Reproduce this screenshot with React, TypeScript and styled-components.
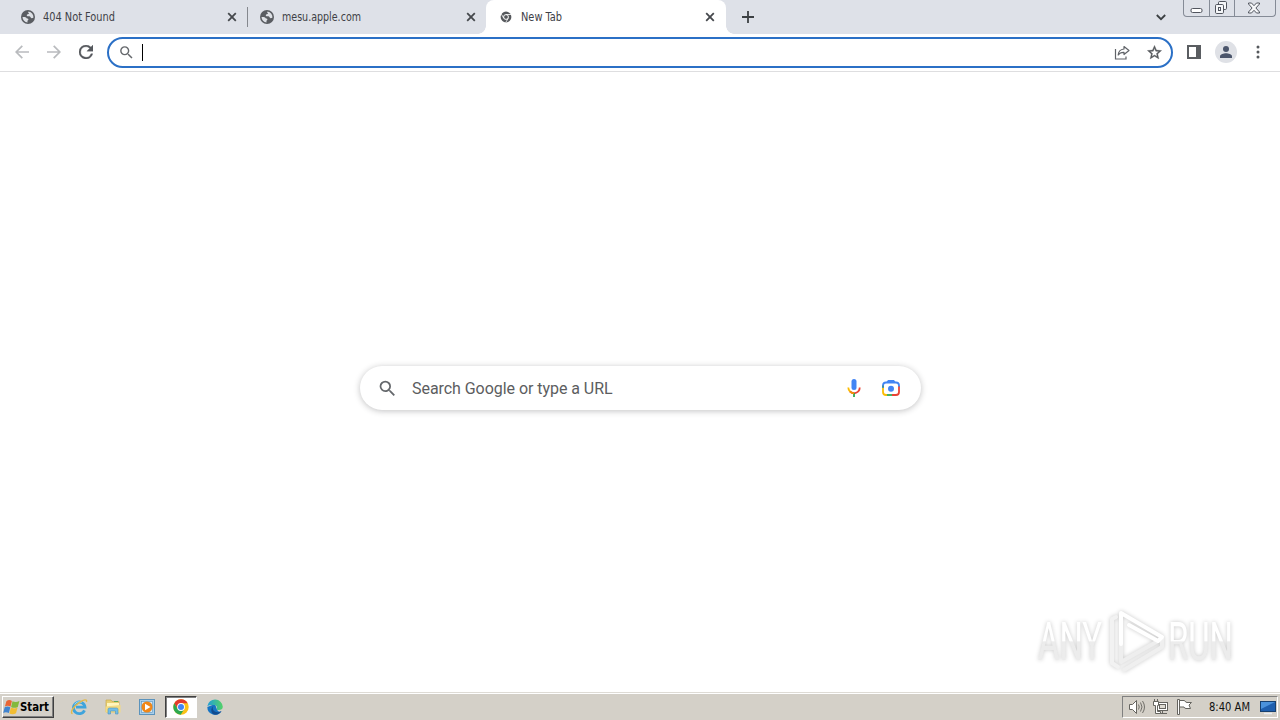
import React from 'react';
import styled, {createGlobalStyle} from 'styled-components';

const GlobalStyle = createGlobalStyle`
  * {
    box-sizing: border-box;
  }

  body {
    margin: 0;
    overflow: hidden;
    background: #fff;
  }

  svg {
    display: block;
    flex: none;
  }
`

interface TabProps {
    title: string
    icon: React.ReactNode
    active?: boolean
    divider?: boolean
    textWidth: number
}

const Globe: React.FC = () => (
    <svg width="14" height="14" viewBox="0 0 14 14">
        <circle cx="7" cy="7" r="7" fill="#5a5d62"/>
        <path d="M7.6 1.6c-.9 1-.2 1.5.5 1.9-.8.8-2 .5-2.3 1.6-.2.9.6 1.3 1.6 1.2 1.2-.1 2 .3 2.3 1.2.4 1 1.5.9 2.7.3a5.5 5.5 0 0 0-4.8-6.2z" fill="#dee1e6"/>
        <path d="M1.5 7.1c1.600-.2 3.600 0 4 1 .4.8 1.800.4 1.900 1.300.1.8-1.100.9-1 1.700l.2 1.400A5.500 5.500 0 0 1 1.500 7.100z" fill="#dee1e6"/>
    </svg>
)

const GreyChrome: React.FC = () => (
    <svg width="14" height="14" viewBox="0 0 14 14">
        <circle cx="7" cy="7" r="5.4" fill="#55585c"/>
        <circle cx="7" cy="7" r="2.4" fill="none" stroke="#fff" strokeWidth="1"/>
        <path d="M7 4.5h5M4.8 8.3 2.4 4.2M9.2 8.3l-2.5 4.2" stroke="#fff" strokeWidth=".8"/>
    </svg>
)

const Cross: React.FC = () => (
    <svg width="10" height="10" viewBox="0 0 10 10">
        <path d="M1.2 1.2l7.6 7.6M8.8 1.2L1.2 8.8" stroke="#45484c" strokeWidth="1.8"/>
    </svg>
)

const Magnifier: React.FC<{size: number}> = ({size}) => (
    <svg width={size} height={size} viewBox="0 0 24 24" fill="#65686c">
        <path d="M15.5 14h-.79l-.28-.27A6.471 6.471 0 0 0 16 9.5 6.5 6.5 0 1 0 9.5 16c1.61 0 3.09-.59 4.23-1.57l.27.28v.79l5 4.99L20.49 19l-4.99-5zm-6 0C7.01 14 5 11.99 5 9.5S7.01 5 9.5 5 14 7.01 14 9.5 11.99 14 9.5 14z"/>
    </svg>
)

const Tab: React.FC<TabProps> = ({title, icon, active, divider, textWidth}) => (
    <TabStyled $active={active} $divider={divider}>
        {icon}
        <TabTitle $width={textWidth}>
            <svg width="150" height="16">
                <text x="0" y="12" textLength={textWidth} lengthAdjust="spacingAndGlyphs">{title}</text>
            </svg>
        </TabTitle>
        <Cross/>
    </TabStyled>
)

const WindowButtons: React.FC = () => (
    <WindowButtonsStyled>
        <WindowButton $width={25}>
            <svg width="13" height="14" viewBox="0 0 13 14">
                <rect x="1" y="7.5" width="11" height="4" rx="1.5" fill="#fff" stroke="#51555e"/>
            </svg>
        </WindowButton>
        <WindowButton $width={25}>
            <svg width="16" height="16" viewBox="1 0 16 16" fill="#f6f7f9" stroke="#51555e">
                <rect x="5.5" y="1.5" width="8" height="8" rx="1.2"/>
                <rect x="2.5" y="4.5" width="8" height="9" rx="1.2"/>
                <rect x="5.5" y="7.5" width="2" height="3"/>
            </svg>
        </WindowButton>
        <WindowButton $width={41}>
            <svg width="14" height="12" viewBox="1 0 14 12">
                <path d="M1.500 1h3l2.500 2.700L9.500 1h3v1L8.900 6l3.600 4v1h-3L7 8.300 4.500 11h-3v-1l3.600-4L1.500 2z" fill="#f6f7f9" stroke="#51555e"/>
            </svg>
        </WindowButton>
    </WindowButtonsStyled>
)

const ChromeLogo: React.FC = () => (
    <svg width="16" height="16" viewBox="0 0 16 16">
        <circle cx="8" cy="8" r="7.7" fill="#fbc116"/>
        <path d="M1.3 4.2A7.7 7.7 0 0 1 14.7 4.2H8L4.7 9.9z" fill="#e33b2e"/>
        <path d="M1.3 4.2A7.7 7.7 0 0 0 7.7 15.7L11.3 10H4.7z" fill="#2da94f"/>
        <circle cx="8" cy="8" r="3.9" fill="#fff"/>
        <circle cx="8" cy="8" r="3" fill="#4285f4"/>
    </svg>
)

const Explorer: React.FC = () => (
    <svg width="18" height="18" viewBox="0 0 18 18">
        <path d="M14.5 12.3A5.800 5.800 0 1 1 15 9.200H6" fill="none" stroke="#3fa4dc" strokeWidth="2.8"/>
        <path d="M4.6 6.5a5 5 0 0 1 7-2" fill="none" stroke="#9adcf8" strokeWidth="1"/>
        <path d="M2.6 15.6C-.6 15.2 3.500 8 9.500 4.300 13.600 1.500 17.600 .8 16.400 4" fill="none" stroke="#e3b94a" strokeWidth="1.4"/>
    </svg>
)

const Folder: React.FC = () => (
    <svg width="18" height="18" viewBox="0 0 18 18">
        <path d="M2 3.500V2h5l1 1.500h7V14H2z" fill="#e9cf72" stroke="#c9a94c" strokeWidth=".7"/>
        <path d="M3 5h12v4H3z" fill="#fff5bd"/>
        <path d="M10 3.500h4" stroke="#5aa75c"/>
        <path d="M1.500 8.500 16.500 7v7.500h-15z" fill="#f2da83"/>
        <path d="M4 16v-4.500q0-1.500 1.500-1.500h7q1.500 0 1.500 1.500V16h-2.500v-3h-5v3z" fill="#72bde7" stroke="#4c93bd" strokeWidth=".6"/>
    </svg>
)

const MediaPlayer: React.FC = () => (
    <svg width="16" height="16" viewBox="0 0 16 16">
        <rect x=".5" y=".5" width="15" height="15" fill="#a9cfeb" stroke="#5b93bc"/>
        <rect x="2.500" y="2.500" width="11" height="11" fill="#d5e8f5" stroke="#5b93bc" strokeWidth=".6"/>
        <circle cx="8" cy="8" r="5.500" fill="#f08718"/>
        <path d="M6 4.800v6.400L11.500 8z" fill="#fff"/>
    </svg>
)

const Edge: React.FC = () => (
    <svg width="16" height="16" viewBox="0 0 16 16">
        <defs>
            <linearGradient id="edgeTop" x1="0" x2="1">
                <stop offset="0" stopColor="#229ed9"/>
                <stop offset="1" stopColor="#54d267"/>
            </linearGradient>
        </defs>
        <path d="M.3 8A7.700 7.700 0 0 0 14.500 12.200C12.500 13.200 10.500 12.500 9.700 9.800L8 5z" fill="#1673c4"/>
        <path d="M.3 7.200A7.800 7.800 0 0 1 15.800 7.800C15.800 10 14 11.100 12 11.100c-1.800 0-2.700-.5-2.300-1.300.9-1.600-.2-3.800-3-3.800C3.500 6 1.200 6.300.3 7.200z" fill="url(#edgeTop)"/>
        <path d="M6.500 7.200C4.500 9 6.500 13.500 11 13.200c1.500-.1 3-.8 3.500-1.200-1.500 2.500-3.800 3.700-6.500 3.800C3.500 15 3.300 9 6.500 7.200z" fill="#124b8f"/>
    </svg>
)

const WindowsFlag: React.FC = () => (
    <svg width="17" height="17" viewBox="0 0 17 17">
        <path d="M3.400 2.200Q6 .2 8.900 1.900L7.500 7.700Q4.800 5.900 1.900 7.500z" fill="#e96535"/>
        <path d="M9.500 2.200q3 1.700 6.900-.1l-1.600 5.800Q11.200 9.700 8.100 7.900z" fill="#83b93d"/>
        <path d="M1.700 8.200q2.900-1.600 5.600.1L5.900 14.100Q3.100 12.300.2 13.900z" fill="#4184cf"/>
        <path d="M7.900 8.600q3.200 1.700 6.700-.1l-1.600 5.800q-3.400 1.800-6.600.1z" fill="#f2bd32"/>
    </svg>
)

const Watermark: React.FC = () => (
    <WatermarkStyled>
        <svg width="250" height="72" viewBox="0 0 250 72">
            <defs>
                <linearGradient id="fade" gradientUnits="userSpaceOnUse" x1="0" y1="0" x2="0" y2="72">
                    <stop offset=".48" stopColor="#fff"/>
                    <stop offset=".5" stopColor="#ececec"/>
                </linearGradient>
            </defs>
            <text x="8" y="54" textLength="64" lengthAdjust="spacingAndGlyphs" fill="url(#fade)">ANY</text>
            <text x="138" y="54" textLength="65" lengthAdjust="spacingAndGlyphs" fill="url(#fade)">RUN</text>
            <g fill="none" strokeWidth="4" strokeLinejoin="round" strokeLinecap="round">
                <path d="M86 11l-4 2v44l6 4" stroke="#f2f2f2"/>
                <path d="M91 31v25l37-21" stroke="#eee"/>
                <path d="M94 64l38-23v-9" stroke="#efefef"/>
                <path d="M91 38V7l41 24-4 4-29-16" stroke="#fff"/>
            </g>
        </svg>
    </WatermarkStyled>
)

const App: React.FC = () => {
    return (
        <Screen>
            <GlobalStyle/>
            <TabStrip>
                <Tab title="404 Not Found" icon={<Globe/>} textWidth={72} divider/>
                <Tab title="mesu.apple.com" icon={<Globe/>} textWidth={79}/>
                <Tab title="New Tab" icon={<GreyChrome/>} textWidth={41} active/>
                <NewTabButton>
                    <svg width="12" height="12" viewBox="0 0 12 12">
                        <path d="M6 0v12M0 6h12" stroke="#3c4043" strokeWidth="1.8"/>
                    </svg>
                </NewTabButton>
                <TabSearch>
                    <svg width="10" height="7" viewBox="0 0 10 7">
                        <path d="M.8 1l4.200 4.200L9.200 1" fill="none" stroke="#3c4043" strokeWidth="1.800"/>
                    </svg>
                </TabSearch>
                <WindowButtons/>
            </TabStrip>
            <Toolbar>
                <ToolButton>
                    <svg width="14" height="14" viewBox="0 0 14 14" fill="none" stroke="#b9bbbe" strokeWidth="1.700">
                        <path d="M14 7H1.200M7.300 .8L1.200 7l6.100 6.200"/>
                    </svg>
                </ToolButton>
                <ToolButton>
                    <svg width="14" height="14" viewBox="0 0 14 14" fill="none" stroke="#b9bbbe" strokeWidth="1.700">
                        <path d="M0 7h12.800M6.700 .8L12.800 7l-6.100 6.200"/>
                    </svg>
                </ToolButton>
                <ToolButton>
                    <svg width="14" height="14" viewBox="4 4 16 16" fill="#55585c" stroke="#55585c" strokeWidth=".4">
                        <path d="M17.650 6.350A7.958 7.958 0 0 0 12 4a8 8 0 1 0 7.730 10h-2.080A6 6 0 1 1 12 6c1.660 0 3.140.69 4.220 1.780L13 11h7V4l-2.350 2.350z"/>
                    </svg>
                </ToolButton>
                <Omnibox>
                    <Magnifier size={17}/>
                    <Caret/>
                    <Spacer/>
                    <ToolButton>
                        <svg width="16" height="15" viewBox="0 0 16 15" fill="none" stroke="#606368" strokeWidth="1.200">
                            <path d="M1.500 4v10H12v-2.500"/>
                            <path d="M10 1.500l5 4-5 4V7.300C7.500 7.200 5.500 8 4.200 10c.2-3.200 2-5.600 5.800-6z" strokeLinejoin="round"/>
                        </svg>
                    </ToolButton>
                    <ToolButton>
                        <svg width="17" height="17" viewBox="0 0 24 24" fill="#55585c" stroke="#55585c" strokeWidth=".5">
                            <path d="M22 9.240l-7.190-.62L12 2 9.190 8.630 2 9.240l5.460 4.730L5.820 21 12 17.270 18.180 21l-1.630-7.030L22 9.240zM12 15.400l-3.760 2.270 1-4.280-3.320-2.880 4.380-.38L12 6.100l1.710 4.040 4.380.38-3.320 2.880 1 4.280L12 15.400z"/>
                        </svg>
                    </ToolButton>
                </Omnibox>
                <ToolActions>
                    <ToolButton>
                        <svg width="14" height="14" viewBox="0 0 14 14">
                            <rect x="1" y="1" width="12" height="12" fill="#fff" stroke="#5a5d61" strokeWidth="2"/>
                            <path d="M9 1h4v12H9z" fill="#5a5d61"/>
                        </svg>
                    </ToolButton>
                    <ToolButton>
                        <Avatar>
                            <svg width="12" height="12" viewBox="0 0 12 12" fill="#4b556b">
                                <circle cx="6" cy="3" r="3"/>
                                <path d="M0 12v-1.800C0 8.200 3.800 7.200 6 7.200s6 1 6 3V12z"/>
                            </svg>
                        </Avatar>
                    </ToolButton>
                    <ToolButton>
                        <svg width="4" height="14" viewBox="0 0 4 14" fill="#55585c">
                            <circle cx="2" cy="2" r="1.500"/>
                            <circle cx="2" cy="7" r="1.500"/>
                            <circle cx="2" cy="12" r="1.500"/>
                        </svg>
                    </ToolButton>
                </ToolActions>
            </Toolbar>
            <Page>
                <SearchBox>
                    <Magnifier size={21}/>
                    <Placeholder>Search Google or type a URL</Placeholder>
                    <svg width="14" height="20" viewBox="0 0 14 20" fill="none">
                        <rect x="4.500" y="1" width="5" height="11" rx="2.500" fill="#4285f4"/>
                        <path d="M1.300 9.500A5.700 5.700 0 0 0 3 13.500" stroke="#fbbc04" strokeWidth="1.800"/>
                        <path d="M3 13.500A5.700 5.700 0 0 0 12.700 9.500" stroke="#ea4335" strokeWidth="1.800"/>
                        <path d="M7 15v4" stroke="#34a853" strokeWidth="1.800"/>
                        <path d="M3 13.500Q4.500 15.200 7 15.300" stroke="#f29900" strokeWidth="1.800"/>
                    </svg>
                    <svg width="20" height="20" viewBox="0 0 20 20" fill="none" strokeWidth="1.800">
                        <path d="M2 9V7.500Q2 4.500 5 4.500h10Q18 4.500 18 7.500V9" stroke="#4285f4"/>
                        <path d="M5.500 4l1.500-2h6l1.500 2z" fill="#4285f4"/>
                        <path d="M2 10v4Q2 17 5 17h1" stroke="#fbbc04"/>
                        <path d="M2 7.500V10" stroke="#3c8f9c"/>
                        <path d="M6 17h5" stroke="#34a853"/>
                        <path d="M11 17h4q3 0 3-3V8.500" stroke="#ea4335"/>
                        <circle cx="10" cy="10.700" r="3" fill="#4285f4"/>
                    </svg>
                </SearchBox>
                <Watermark/>
            </Page>
            <Taskbar>
                <StartButton>
                    <WindowsFlag/>
                    <svg width="30" height="16">
                        <text x="0" y="12" textLength="29" lengthAdjust="spacingAndGlyphs">Start</text>
                    </svg>
                </StartButton>
                <QuickLaunch>
                    <TaskButton><Explorer/></TaskButton>
                    <TaskButton><Folder/></TaskButton>
                    <TaskButton><MediaPlayer/></TaskButton>
                    <TaskButton $active><ChromeLogo/></TaskButton>
                    <TaskButton><Edge/></TaskButton>
                </QuickLaunch>
                <Tray>
                    <svg width="18" height="16" viewBox="0 0 18 16" fill="none" stroke="#65645f">
                        <path d="M1.500 5.500h3l4-4v13l-4-4h-3z" fill="#fff"/>
                        <path d="M10.500 5.500q1.500 2.500 0 5M12.500 3.500q3 4.500 0 9M14.500 2q4 6 0 12" strokeWidth=".9"/>
                    </svg>
                    <svg width="17" height="16" viewBox="0 0 17 16" fill="#fff" stroke="#65645f">
                        <rect x="5.500" y="3.500" width="10" height="8"/>
                        <rect x="7.500" y="5.500" width="6" height="4" fill="#dedbd3"/>
                        <path d="M7 14.500h8M10.500 12v2.500"/>
                        <path d="M1.500 2.500h5v4h-1v6h3v2h-5v-8h-2zM2.500 2.500V0M5.500 2.500V0"/>
                    </svg>
                    <svg width="17" height="16" viewBox="-1 0 17 16" fill="#fff" stroke="#65645f">
                        <path d="M3.500 1.500h5q1 2 2.500 2h4.500L13 6l1.500 3.500H10q-1.500 0-2-1.500H3.500z"/>
                        <path d="M1.500.5h2v15h-2z"/>
                    </svg>
                    <Clock>
                        <svg width="42" height="16">
                            <text x="0" y="12" textLength="41" lengthAdjust="spacingAndGlyphs">8:40 AM</text>
                        </svg>
                    </Clock>
                    <svg width="16" height="15" viewBox="0 0 16 15">
                        <rect x=".5" y="1.500" width="15" height="10" fill="#1f5fae" stroke="#17406f"/>
                        <path d="M1 2h14L1 9z" fill="#4b92db"/>
                        <path d="M4 13.500h8" stroke="#e9edf2" strokeWidth="1.500"/>
                    </svg>
                </Tray>
            </Taskbar>
        </Screen>
    );
};

const Screen = styled.div`
  width: 1280px;
  height: 720px;
  display: flex;
  flex-direction: column;
  overflow: hidden;
  font-family: "DejaVu Sans Condensed", "DejaVu Sans", sans-serif;
  font-size: 11.5px;
`

const TabStrip = styled.div`
  height: 34px;
  flex: none;
  display: flex;
  padding-left: 8px;
  background: #dee1e8;
`

const TabStyled = styled.div<{$active?: boolean, $divider?: boolean}>`
  width: ${p => p.$active ? 240 : 239}px;
  height: 34px;
  padding: 0 ${p => p.$active ? 11 : 10}px 0 13px;
  display: flex;
  align-items: center;
  position: relative;
  background: ${p => p.$active ? '#fff' : 'transparent'};
  border-radius: 8px 8px 0 0;

  &::before, &::after {
    content: '';
    display: ${p => p.$active ? 'block' : 'none'};
    position: absolute;
    bottom: 0;
    width: 8px;
    height: 8px;
  }

  &::before {
    left: -8px;
    background: radial-gradient(circle at 0 0, transparent 7.5px, #fff 8px);
  }

  &::after {
    right: -8px;
    background: radial-gradient(circle at 100% 0, transparent 7.5px, #fff 8px);
  }

  ${p => p.$divider && `
    &::after {
      display: block;
      right: -1px;
      bottom: 7px;
      width: 1px;
      height: 20px;
      background: #85888e;
    }
  `}
`

const TabTitle = styled.div<{$width: number}>`
  flex: 1;
  min-width: ${p => p.$width}px;
  margin-left: 8px;
  fill: #3e4147;
`

const NewTabButton = styled.div`
  width: 28px;
  height: 34px;
  margin-left: 8px;
  display: flex;
  align-items: center;
  justify-content: center;
`

const TabSearch = styled.div`
  width: 28px;
  height: 34px;
  margin-left: auto;
  margin-right: 8px;
  display: flex;
  align-items: center;
  justify-content: center;
`

const WindowButtonsStyled = styled.div`
  height: 17px;
  margin-right: 4px;
  display: flex;
  border: 1px solid #858b96;
  border-top: none;
  border-radius: 0 0 4px 4px;
`

const WindowButton = styled.div<{$width: number}>`
  width: ${p => p.$width}px;
  display: flex;
  align-items: center;
  justify-content: center;

  & + & {
    border-left: 1px solid #858b96;
  }
`

const Toolbar = styled.div`
  height: 38px;
  flex: none;
  display: flex;
  align-items: center;
  padding: 0 6px 1px;
  border-bottom: 1px solid #dedee0;
  background: #fff;
`

const ToolButton = styled.div`
  width: 32px;
  height: 28px;
  flex: none;
  display: flex;
  align-items: center;
  justify-content: center;
`

const Omnibox = styled.div`
  height: 31px;
  flex: 1;
  margin-left: 5px;
  padding: 0 1px 0 9px;
  display: flex;
  align-items: center;
  border: 2px solid #2b70c6;
  border-radius: 16px;
`

const Caret = styled.div`
  width: 1px;
  height: 17px;
  margin-left: 7px;
  background: #000;
`

const Spacer = styled.div`
  flex: 1;
`

const ToolActions = styled.div`
  display: flex;
  margin-left: 5px;
`

const Avatar = styled.div`
  width: 22px;
  height: 22px;
  display: flex;
  align-items: center;
  justify-content: center;
  border-radius: 50%;
  background: #dfe1e6;
`

const Page = styled.main`
  flex: 1;
  display: flex;
  justify-content: center;
  align-items: flex-start;
  padding-top: 294px;
  position: relative;
  background: #fff;
`

const SearchBox = styled.div`
  width: 561px;
  height: 44px;
  margin-left: 1px;
  padding: 0 20px 0 17px;
  display: flex;
  align-items: center;
  border-radius: 22px;
  background: #fff;
  box-shadow: 0 1px 6px rgba(32, 33, 36, .28);

  svg:last-child {
    margin-left: 20px;
  }
`

const Placeholder = styled.div`
  flex: 1;
  margin-left: 14px;
  color: #5c5d60;
  font: 16px Roboto, sans-serif;
  letter-spacing: -.05px;
`

const WatermarkStyled = styled.div`
  position: absolute;
  top: 534px;
  left: 1030px;
  filter: drop-shadow(0 0 2px rgba(0, 0, 0, .22));

  text {
    font: 53px Roboto, sans-serif;
  }
`

const Taskbar = styled.div`
  height: 28px;
  flex: none;
  display: flex;
  align-items: center;
  padding: 2px 2px 1px;
  background: #d4d0c8;
  border-top: 1px solid #dedbd5;
  box-shadow: inset 0 1px #fff;
`

const StartButton = styled.div`
  width: 52px;
  height: 22px;
  display: flex;
  align-items: center;
  border: 1px solid;
  border-color: #fff #404040 #404040 #fff;
  box-shadow: inset -1px -1px #808080;
  font-weight: bold;
`

const QuickLaunch = styled.div`
  display: flex;
  gap: 2px;
  margin-left: 9px;
`

const TaskButton = styled.div<{$active?: boolean}>`
  width: 32px;
  height: 22px;
  display: flex;
  align-items: center;
  justify-content: center;
  border: 1px solid transparent;
  ${p => p.$active && `
    background: #fff;
    border-color: #404040 #fff #fff #404040;
    box-shadow: inset 1px 1px #808080;
  `}
`

const Tray = styled.div`
  height: 22px;
  margin-left: auto;
  padding: 0 1px 0 5px;
  display: flex;
  align-items: center;
  gap: 6px;
  border: 1px solid;
  border-color: #808080 #fff #fff #808080;
`

const Clock = styled.div`
  margin: 0 3px 0 11px;
  fill: #111;
`

export default App;
